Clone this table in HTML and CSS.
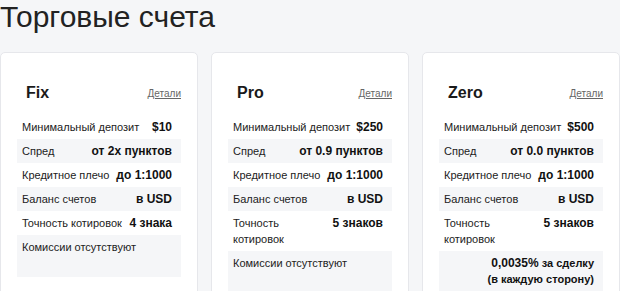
FILE: index.html
```html
<!DOCTYPE html>
<html lang="ru">
<head>
<meta charset="utf-8">
<title>Торговые счета</title>
<link rel="stylesheet" href="styles.css">
</head>
<body>
<h1 class="title">Торговые счета</h1>
<div class="cards">
  <div class="card">
    <div class="card-head"><span class="card-name">Fix</span><a class="details" href="#">Детали</a></div>
    <div class="rows">
      <div class="row"><span class="label">Минимальный депозит</span><span class="value">$10</span></div>
      <div class="row"><span class="label">Спред</span><span class="value">от 2x пунктов</span></div>
      <div class="row"><span class="label">Кредитное плечо</span><span class="value">до 1:1000</span></div>
      <div class="row"><span class="label">Баланс счетов</span><span class="value">в USD</span></div>
      <div class="row"><span class="label">Точность котировок</span><span class="value">4 знака</span></div>
      <div class="row row-note"><span class="label">Комиссии отсутствуют</span></div>
    </div>
  </div>
  <div class="card">
    <div class="card-head"><span class="card-name">Pro</span><a class="details" href="#">Детали</a></div>
    <div class="rows">
      <div class="row"><span class="label">Минимальный депозит</span><span class="value">$250</span></div>
      <div class="row"><span class="label">Спред</span><span class="value">от 0.9 пунктов</span></div>
      <div class="row"><span class="label">Кредитное плечо</span><span class="value">до 1:1000</span></div>
      <div class="row"><span class="label">Баланс счетов</span><span class="value">в USD</span></div>
      <div class="row"><span class="label">Точность котировок</span><span class="value">5 знаков</span></div>
      <div class="row row-note"><span class="label">Комиссии отсутствуют</span></div>
    </div>
  </div>
  <div class="card">
    <div class="card-head"><span class="card-name">Zero</span><a class="details" href="#">Детали</a></div>
    <div class="rows">
      <div class="row"><span class="label">Минимальный депозит</span><span class="value">$500</span></div>
      <div class="row"><span class="label">Спред</span><span class="value">от 0.0 пунктов</span></div>
      <div class="row"><span class="label">Кредитное плечо</span><span class="value">до 1:1000</span></div>
      <div class="row"><span class="label">Баланс счетов</span><span class="value">в USD</span></div>
      <div class="row"><span class="label">Точность котировок</span><span class="value">5 знаков</span></div>
      <div class="row row-note row-fee"><span class="fee"><b class="fee-big">0,0035%</b> <b>за сделку</b><br><b>(в каждую сторону)</b></span></div>
    </div>
  </div>
</div>
</body>
</html>
```
FILE: styles.css
```css
html, body {
  margin: 0;
  padding: 0;
  background: #f5f6f8;
  font-family: "Liberation Sans", Arial, sans-serif;
  color: #222;
  overflow: hidden;
}

.title {
  margin: 0 0 18px 0;
  font-size: 30px;
  line-height: 34px;
  font-weight: normal;
  color: #222;
}

.cards {
  display: grid;
  grid-template-columns: repeat(3, 198px);
  gap: 13px;
}

.card {
  background: #fff;
  border: 1px solid #e6e7eb;
  border-radius: 5px;
  padding: 28px 16px 0 16px;
  min-height: 260px;
}

.card-head {
  display: flex;
  justify-content: space-between;
  align-items: center;
  height: 24px;
  padding-left: 9px;
  margin-bottom: 10px;
}

.card-name {
  font-size: 16px;
  font-weight: bold;
  color: #1a1a1a;
}

.details {
  font-size: 10px;
  color: #666;
  text-decoration: underline;
}

.row {
  display: flex;
  justify-content: space-between;
  align-items: flex-start;
  padding: 4px 9px 4px 5px;
  font-size: 11px;
  line-height: 16px;
}

.row:nth-child(even) {
  background: #f5f6f8;
}

.value {
  font-size: 12px;
  font-weight: bold;
  white-space: nowrap;
  margin-left: 6px;
  color: #111;
}

.row-note {
  padding-bottom: 22px;
}

.row-fee {
  justify-content: flex-end;
  text-align: right;
}

.fee {
  font-size: 11px;
  color: #111;
}

.fee-big {
  font-size: 12px;
}
```
